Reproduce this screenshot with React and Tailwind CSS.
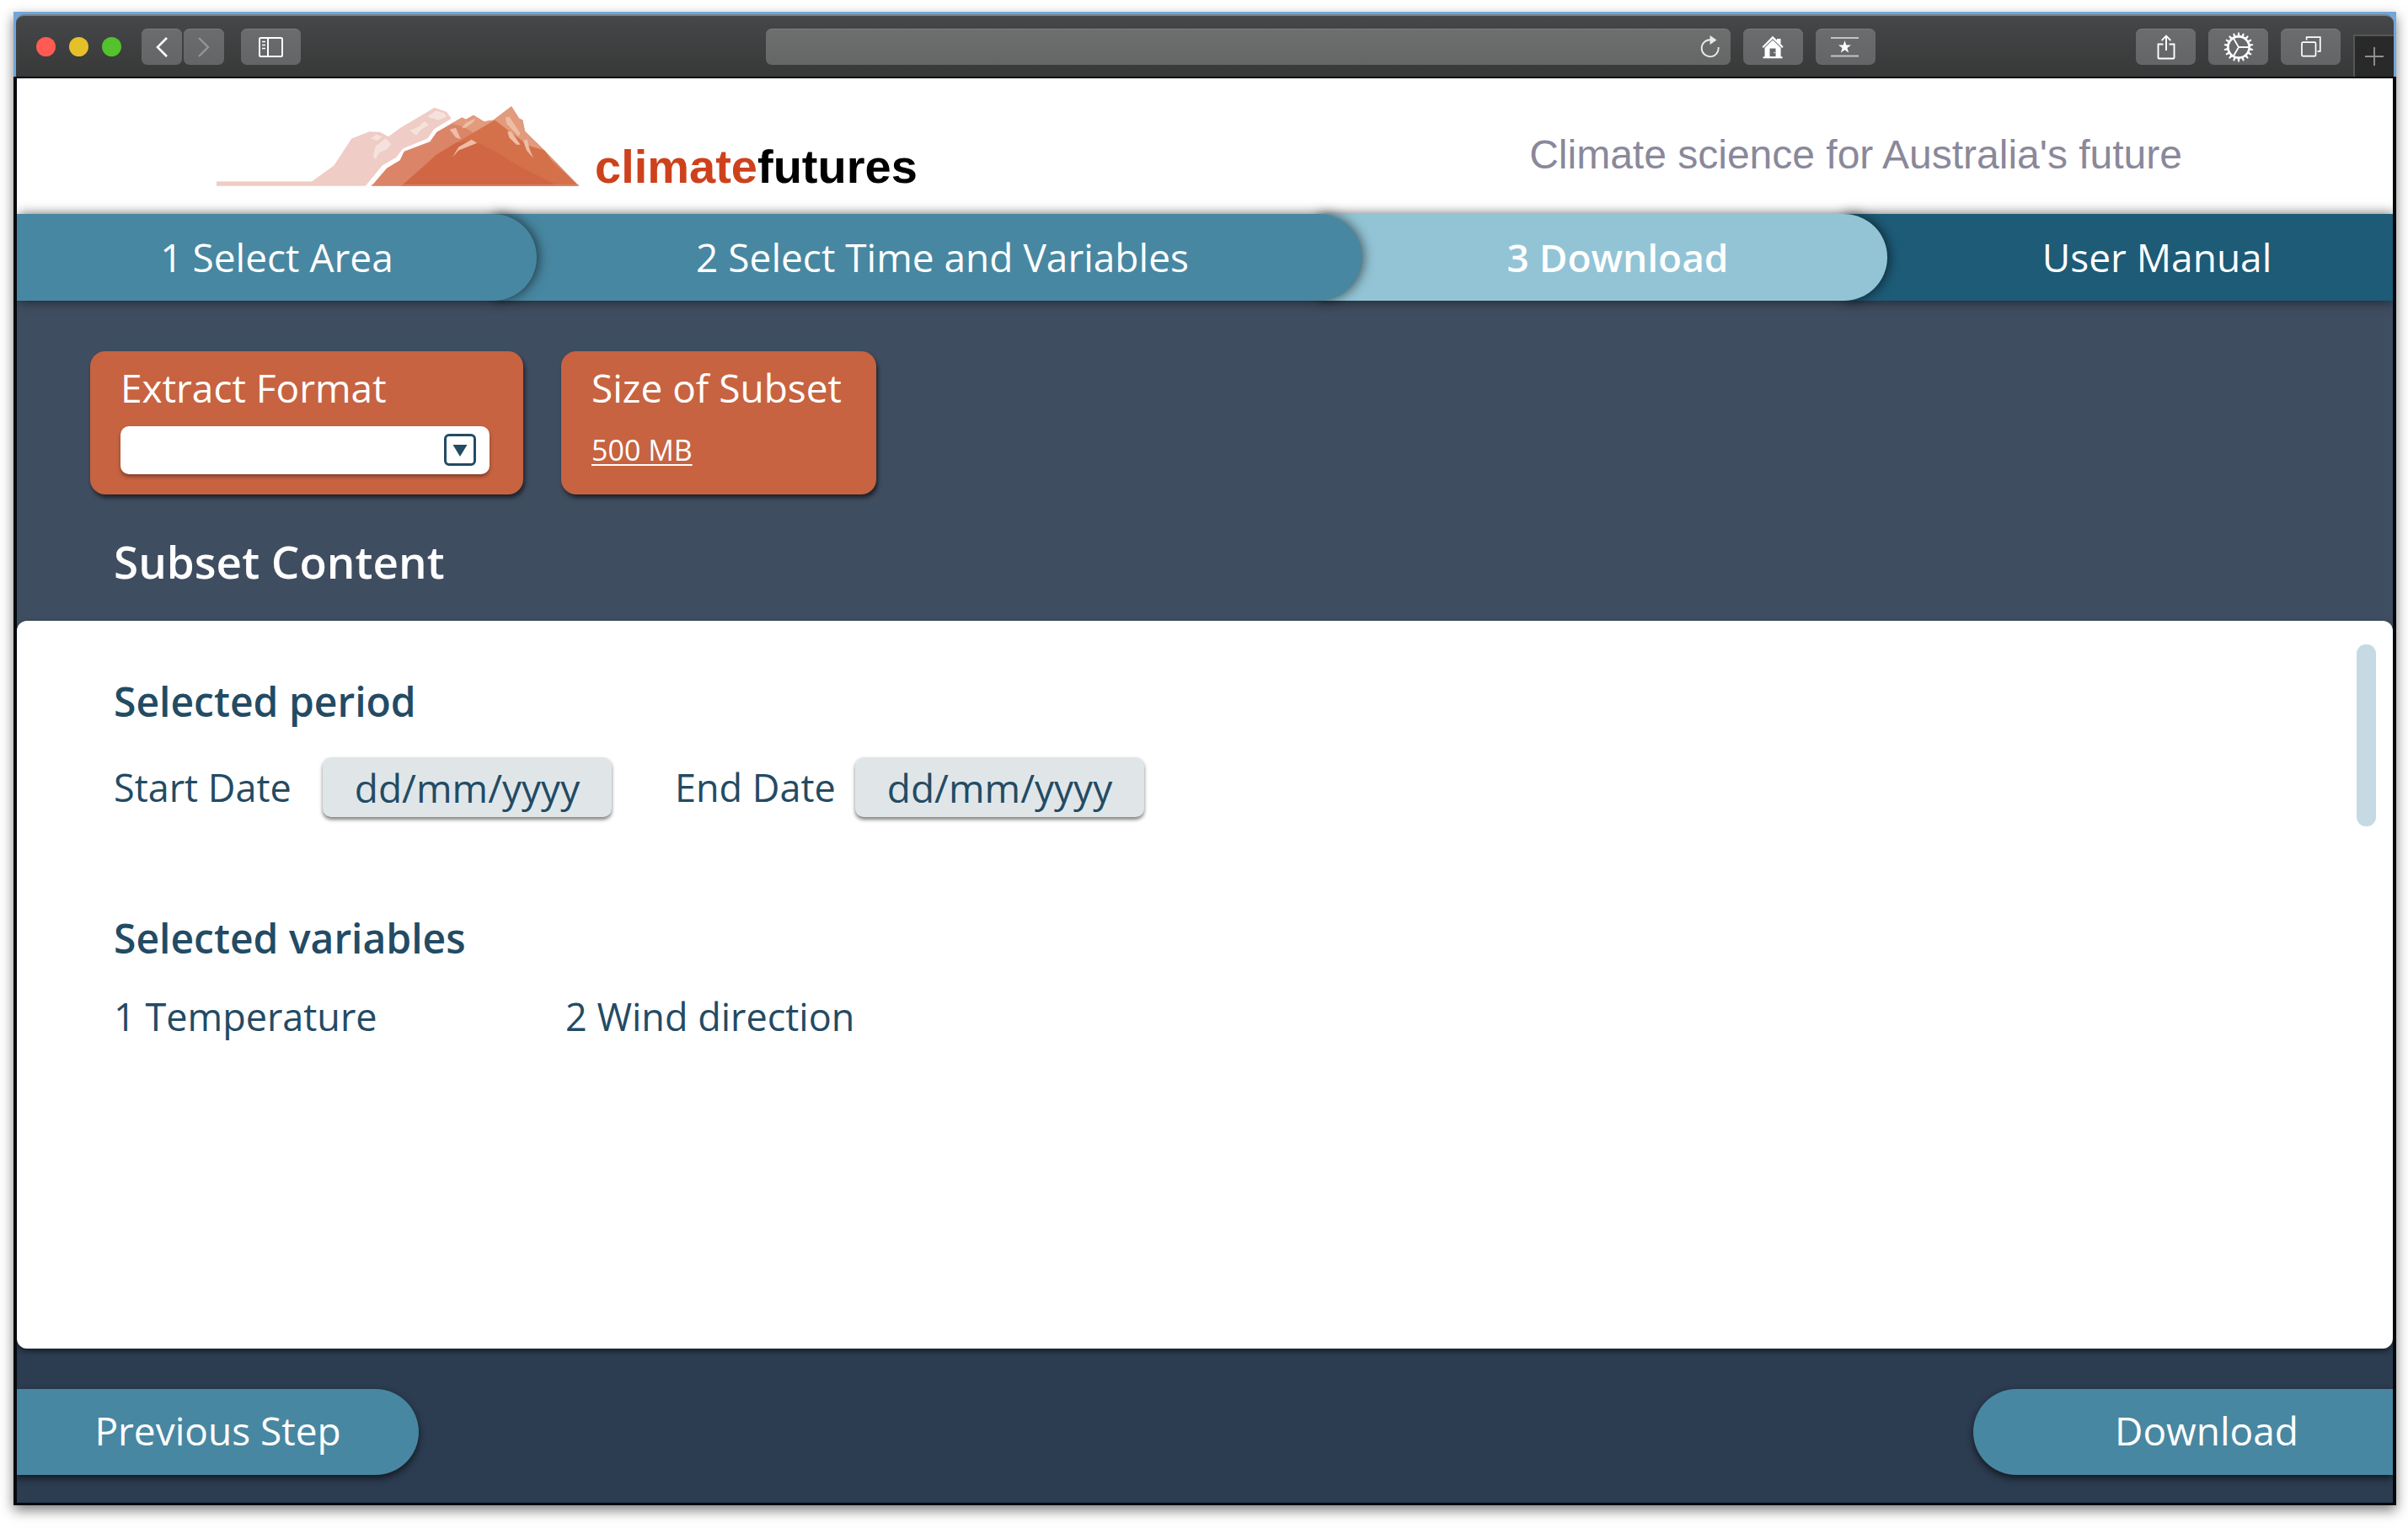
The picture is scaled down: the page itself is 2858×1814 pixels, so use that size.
import React from "react";

const SANS = "font-['Open_Sans','Noto_Sans',sans-serif]";
const ARIAL = "font-['Liberation_Sans',Arial,sans-serif]";

function ToolButton({ label, className = "w-[71px]", children }) {
  return (
    <button
      type="button"
      aria-label={label}
      className={`flex h-[43px] shrink-0 items-center justify-center rounded-[7px] border-t border-[#7b7c7d] bg-linear-to-b from-[#6b6c6d] to-[#646566] text-white ${className}`}
    >
      {children}
    </button>
  );
}

function GearIcon() {
  const teeth = Array.from({ length: 18 }, (_, i) => i * 20);
  return (
    <svg width="36" height="36" viewBox="-18 -18 36 36" fill="none" stroke="currentColor" aria-hidden="true">
      <circle r="12.6" strokeWidth="2.6" />
      {teeth.map((a) => (
        <path key={a} d="M-1.5 -13 L-0.8 -17.4 H0.8 L1.5 -13 Z" fill="currentColor" stroke="none" transform={`rotate(${a})`} />
      ))}
      <path d="M0 0 H12.5 M0 0 L-6.4 -11 M0 0 L-6.4 11" strokeWidth="1.8" />
    </svg>
  );
}

function TitleBar() {
  return (
    <div className="mx-[3px] flex h-[74px] items-center rounded-t-[10px] border-t-2 border-[#7d7e7f] bg-linear-to-b from-[#464748] to-[#373838] pl-6">
      <div className="flex shrink-0 gap-4">
        <button type="button" aria-label="Close" className="size-[23px] rounded-full bg-[#ff5b52]" />
        <button type="button" aria-label="Minimise" className="size-[23px] rounded-full bg-[#e6c02a]" />
        <button type="button" aria-label="Zoom" className="size-[23px] rounded-full bg-[#53c22c]" />
      </div>
      <div className="ml-6 flex shrink-0 gap-0.5">
        <ToolButton label="Back" className="w-12">
          <svg width="14" height="24" viewBox="0 0 14 24" fill="none" stroke="currentColor" strokeWidth="2.6" aria-hidden="true">
            <path d="M13 1 L2 12 L13 23" />
          </svg>
        </ToolButton>
        <ToolButton label="Forward" className="w-12">
          <svg width="14" height="24" viewBox="0 0 14 24" fill="none" stroke="#949596" strokeWidth="2.4" aria-hidden="true">
            <path d="M1 1 L12 12 L1 23" />
          </svg>
        </ToolButton>
      </div>
      <div className="ml-5 flex shrink-0">
        <ToolButton label="Sidebar">
          <svg width="29" height="24" viewBox="0 0 29 24" fill="none" stroke="currentColor" strokeWidth="2" aria-hidden="true">
            <rect x="1" y="1" width="27" height="22" rx="1.5" />
            <path d="M11 1 V23" />
            <path d="M4 5.5 H8 M4 9.5 H8 M4 13.5 H8" strokeWidth="1.4" />
          </svg>
        </ToolButton>
      </div>
      <div className="flex-[551]" />
      <div className="flex h-[43px] flex-[1144] items-center rounded-[7px] border-t border-[#7f8081] bg-linear-to-b from-[#6d6e6e] to-[#656666]">
        <input type="text" aria-label="Address" className="h-full min-w-0 flex-1 bg-transparent px-4 text-2xl text-white outline-none" />
        <button type="button" aria-label="Reload" className="pr-3 text-[#e9e9e9]">
          <svg width="24" height="27" viewBox="0 0 24 27" fill="none" aria-hidden="true">
            <path d="M21.6 14 A10 10 0 1 1 12 5.2" stroke="currentColor" strokeWidth="1.9" />
            <path d="M11.5 0 L19.5 5.5 L11.5 11 Z" fill="currentColor" />
          </svg>
        </button>
      </div>
      <div className="ml-[15px] flex shrink-0 gap-[15px]">
        <ToolButton label="Home">
          <svg width="26" height="28" viewBox="0 0 26 28" fill="currentColor" aria-hidden="true">
            <path d="M0.5 13.5 L13 0.8 L18 5.8 V4 H22.5 V10.3 L25.6 13.5 L24.2 15 L13 4.2 L1.9 15 Z" />
            <path fillRule="evenodd" d="M3.5 14.8 L13 5.6 L22.6 14.8 V25.2 H24.5 V27.3 H1.5 V25.2 H3.5 Z M9.5 15.5 V25 H16.5 V15.5 Z" />
            <circle cx="15" cy="20.5" r="0.8" />
          </svg>
        </ToolButton>
        <ToolButton label="Top Sites">
          <svg width="34" height="26" viewBox="0 0 34 26" aria-hidden="true">
            <path d="M0 2 H33 M0 23.5 H33" stroke="#c4c4c5" strokeWidth="2" />
            <path d="M16.5 5.2 L18.3 10.6 H24 L19.4 14 L21.2 19.6 L16.5 16.2 L11.8 19.6 L13.6 14 L9 10.6 H14.7 Z" fill="currentColor" />
          </svg>
        </ToolButton>
      </div>
      <div className="flex-[309]" />
      <div className="flex shrink-0 gap-[15px]">
        <ToolButton label="Share">
          <svg width="22" height="30" viewBox="0 0 22 30" fill="none" stroke="currentColor" strokeWidth="1.9" aria-hidden="true">
            <path d="M7.5 11.5 H1.5 V27.5 Q1.5 28.5 2.5 28.5 H19.5 Q20.5 28.5 20.5 27.5 V11.5 H14.5" />
            <path d="M11 19 V1.6 M5.6 7.2 L11 1.6 L16.4 7.2" />
          </svg>
        </ToolButton>
        <ToolButton label="Settings">
          <GearIcon />
        </ToolButton>
        <ToolButton label="Show tabs">
          <svg width="24" height="25" viewBox="0 0 24 25" fill="none" stroke="currentColor" strokeWidth="1.7" aria-hidden="true">
            <rect x="1" y="7.2" width="16.5" height="16.5" rx="1.5" />
            <path d="M6.6 4.5 V1.2 H22.8 V17.8 H19.5" />
          </svg>
        </ToolButton>
      </div>
      <button
        type="button"
        aria-label="New tab"
        className="ml-[15px] flex h-[50px] w-12 shrink-0 items-center justify-center self-end border-t-2 border-l-2 border-[#555656] bg-[#292929] text-[#909192]"
      >
        <svg width="22" height="22" viewBox="0 0 22 22" stroke="currentColor" strokeWidth="1.9" aria-hidden="true">
          <path d="M11 0 V22 M0 11 H22" />
        </svg>
      </button>
    </div>
  );
}

function Mountains() {
  return (
    <svg width="431" height="97" viewBox="22 30 1293 290" className="shrink-0" aria-hidden="true">
      <path d="M22 301 H362 L555 316 H22 Z" fill="#f1cdc6" />
      <path
        d="M360 302 L440 244 L503 148 L566 123 L604 125 L634 141 L678 109 L798 38 L841 53 L858 77 L797 114 L773 148 L685 184 L662 215 L612 244 L553 316 H22 V302 Z"
        fill="#efccc5"
      />
      <path d="M774 71 L802 49 L834 57 L841 71 L812 82 Z M710 120 L745 104 L762 86 L778 99 L748 118 L734 137 Z M570 147 L592 134 L612 142 L594 155 Z M580 212 L588 176 L624 148 L644 168 L626 188 L602 198 L588 222 Z" fill="#f6e2dd" />
      <path
        d="M574 317 L628 254 L675 225 L690 194 L782 159 L806 125 L896 73 L910 80 L937 65 L974 87 L1008 82 L1072 33 L1100 77 L1112 82 L1120 122 L1180 180 L1313 317 Z"
        fill="#db8468"
      />
      <path d="M858 95 L896 73 L910 80 L937 65 L974 87 L1014 82 L936 128 L902 106 Z" fill="#e29b7c" />
      <path d="M1008 82 L1072 33 L1100 77 L1112 82 L1120 122 L1180 184 L1240 240 L1150 184 Z" fill="#e29b7c" />
      <path d="M682 317 L805 206 L1013 82 L1130 172 L1190 190 L1220 232 L1306 312 V317 Z" fill="#d4704a" />
      <path d="M680 317 L805 206 L876 162 L940 158 L1020 196 L1090 242 L1222 308 V317 Z" fill="#d16644" />
      <path d="M895 110 L910 92 L944 76 L934 92 L908 110 Z M852 116 L874 110 L892 150 L874 144 Z M862 214 L884 178 L930 152 L950 164 L884 190 Z M1050 74 L1064 70 L1104 130 L1098 140 L1056 96 Z M1058 122 L1072 124 L1104 170 L1090 170 L1064 144 Z M1114 156 L1128 150 L1136 184 L1150 218 L1126 190 Z" fill="#eebda6" />
      <path d="M574 314 H1312" stroke="#dd8a6c" strokeWidth="4" />
    </svg>
  );
}

const shade = "shadow-[2px_0_14px_rgba(0,0,0,0.6)]";

function Steps() {
  const base = "flex h-[103px] items-center justify-center text-[46px] text-white";
  return (
    <nav aria-label="Steps" className="relative grid grid-cols-[617fr_979fr_624fr_600fr]">
      <button type="button" className={`${base} ${shade} relative z-40 rounded-r-full bg-[#4887a1]`}>
        1 Select Area
      </button>
      <button type="button" className={`${base} ${shade} relative z-30 -ml-[52px] rounded-r-full bg-[#4887a1] pl-9`}>
        2 Select Time and Variables
      </button>
      <button
        type="button"
        aria-current="step"
        className={`${base} ${shade} relative z-20 -ml-[52px] rounded-r-full bg-[#92c4d5] pl-9 font-semibold`}
      >
        3 Download
      </button>
      <a href="#manual" className={`${base} ${shade} relative z-10 -ml-[52px] bg-[#1d5b77] pl-[92px]`}>
        User Manual
      </a>
    </nav>
  );
}

function DateField({ id, label, className }) {
  return (
    <div className="flex items-center">
      <label htmlFor={id} className={className}>
        {label}
      </label>
      <input
        id={id}
        type="text"
        placeholder="dd/mm/yyyy"
        className="h-[71px] w-[343px] rounded-[10px] bg-[#e0e6e8] text-center text-[46px] text-[#234b64] shadow-[0_3px_4px_rgba(0,0,0,0.5)] outline-none placeholder:text-[#234b64] placeholder:opacity-100"
      />
    </div>
  );
}

export default function App() {
  return (
    <div className={`flex min-h-screen flex-col bg-white pt-3.5 pr-3.5 pb-[27px] pl-4 ${SANS}`}>
      <div className="flex flex-1 flex-col bg-[#71a6d8] pt-[3px] shadow-[0_6px_14px_rgba(0,0,0,0.5)]">
        <TitleBar />
        <div className="flex flex-1 flex-col overflow-hidden border-t-2 border-r-4 border-b-[3px] border-l-4 border-[#04090e] bg-[#2c3c51]">
          <header className={`flex h-[161px] items-start bg-white pt-8 pr-[250px] pl-[237px] ${ARIAL}`}>
            <Mountains />
            <h1 className="mt-[46px] ml-[18px] text-[56px] leading-[54px] font-bold text-[#cd421c]">
              climate<span className="text-black">futures</span>
            </h1>
            <p className="mt-[34px] ml-auto text-[48px] leading-[50px] text-[#8a889b]">Climate science for Australia's future</p>
          </header>

          <Steps />

          <section className="bg-[#3f4d60] pt-[60px] pb-[52px]">
            <div className="flex gap-[45px] pl-[87px] text-white">
              <div className="h-[170px] w-[514px] rounded-[18px] bg-[#c76341] px-9 pt-[19px] shadow-[2px_4px_5px_rgba(0,0,0,0.55)]">
                <label htmlFor="format" className="block text-[46px] leading-[48px]">
                  Extract Format
                </label>
                <div className="relative mt-[22px] w-[438px]">
                  <select
                    id="format"
                    defaultValue=""
                    className="block h-[57px] w-full appearance-none rounded-[10px] bg-white px-4 text-3xl text-[#234b64] shadow-[0_3px_4px_rgba(0,0,0,0.35)] outline-none"
                  >
                    <option value="" />
                  </select>
                  <svg
                    width="40"
                    height="40"
                    viewBox="0 0 40 40"
                    className="pointer-events-none absolute top-2 right-[15px]"
                    aria-hidden="true"
                  >
                    <rect x="2.5" y="2.5" width="35" height="35" rx="4.5" fill="#fff" stroke="#234b64" strokeWidth="3" />
                    <path d="M11.5 14 H28.5 L20 28 Z" fill="#234b64" />
                  </svg>
                </div>
              </div>
              <div className="h-[170px] w-[374px] rounded-[18px] bg-[#c76341] px-9 pt-[19px] shadow-[2px_4px_5px_rgba(0,0,0,0.55)]">
                <h2 className="text-[46px] leading-[48px] whitespace-nowrap">Size of Subset</h2>
                <a href="#size" className="mt-[30px] inline-block text-[34px] leading-[40px] underline decoration-2 underline-offset-4">
                  500 MB
                </a>
              </div>
            </div>
            <h2 className="mt-[50px] pl-[115px] text-[53px] leading-[60px] font-semibold text-white">Subset Content</h2>
          </section>

          <main className="relative -mt-3 flex flex-1 justify-between rounded-xl bg-white text-[45px] text-[#234b64] shadow-[0_3px_6px_rgba(0,0,0,0.5)]">
            <div className="pt-[66px] pl-[115px]">
              <h3 className="text-[48px] leading-[60px] font-semibold">Selected period</h3>
              <div className="mt-[36px] flex gap-[75px]">
                <DateField id="start" label="Start Date" className="w-[248px]" />
                <DateField id="end" label="End Date" className="w-[214px]" />
              </div>
              <h3 className="mt-[114px] text-[48px] leading-[60px] font-semibold">Selected variables</h3>
              <ol className="mt-[33px] flex leading-[60px]">
                <li className="w-[536px]">1 Temperature</li>
                <li>2 Wind direction</li>
              </ol>
            </div>
            <div className="mt-7 mr-5 h-[216px] w-[23px] rounded-[11px] bg-[#c6dae3]" />
          </main>

          <footer className="flex justify-between pt-12 pb-[33px] text-[46px] text-white">
            <button
              type="button"
              className="h-[102px] w-[477px] rounded-r-full bg-[#4887a1] pb-1 shadow-[0_4px_8px_rgba(0,0,0,0.6)]"
            >
              Previous Step
            </button>
            <button
              type="button"
              className="h-[102px] w-[498px] rounded-l-full bg-[#4887a1] pb-1 pl-14 shadow-[0_4px_8px_rgba(0,0,0,0.6)]"
            >
              Download
            </button>
          </footer>
        </div>
      </div>
    </div>
  );
}
